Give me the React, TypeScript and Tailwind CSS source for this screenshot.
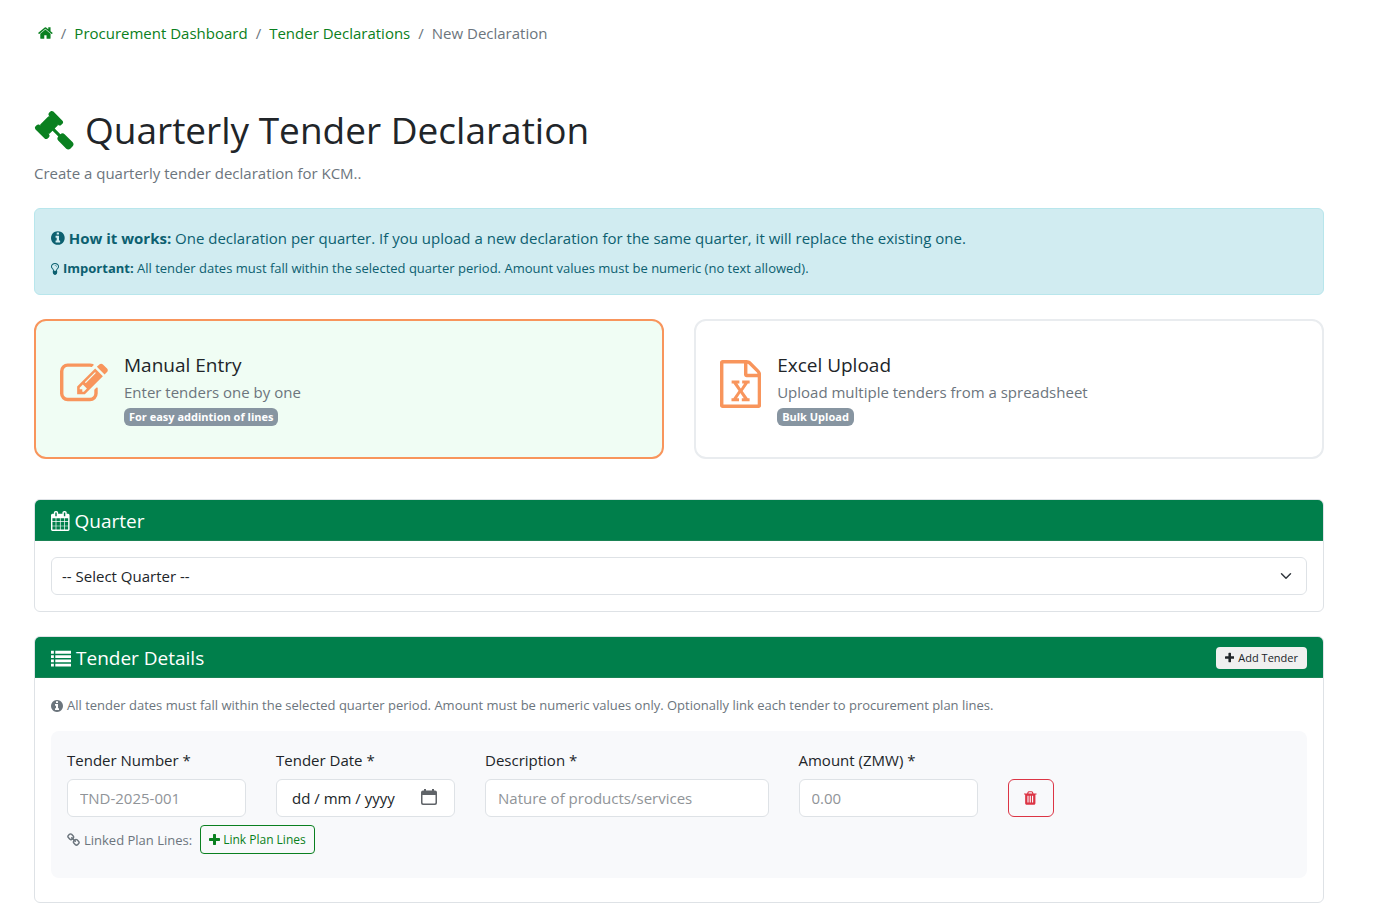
import { ReactNode } from "react";

const icons = {
    home: {
        x: 64, w: 1664,
        d: "M1472 992v480q0 26-19 45t-45 19h-384v-384h-256v384h-384q-26 0-45-19t-19-45v-480q0-1 .5-3t.5-3l575-474 575 474q1 2 1 6zm223-69l-62 74q-8 9-21 11h-3q-13 0-21-7l-692-577-692 577q-12 8-24 7-13-2-21-11l-62-74q-8-10-7-23.5t11-21.5l719-599q32-26 76-26t76 26l244 204v-195q0-14 9-23t23-9h192q14 0 23 9t9 23v408l219 182q10 8 11 21.5t-7 23.5z"
    },
    gavel: {
        x: 0, w: 1792,
        d: "M1771 1536q0 53-37 90l-107 108q-39 37-91 37-53 0-90-37l-363-364q-38-36-38-90 0-53 43-96l-256-256-126 126q-14 14-34 14t-34-14q2 2 12.5 12t12.5 13 10 11.5 10 13.5 6 13.5 5.5 16.5 1.5 18q0 38-28 68-3 3-16.5 18t-19 20.5-18.5 16.5-22 15.5-22 9-26 4.5q-40 0-68-28l-408-408q-28-28-28-68 0-13 4.5-26t9-22 15.5-22 16.5-18.5 20.5-19 18-16.5q30-28 68-28 10 0 18 1.5t16.5 5.5 13.5 6 13.5 10 11.5 10 13 12.5 12 12.5q-14-14-14-34t14-34l348-348q14-14 34-14t34 14q-2-2-12.5-12t-12.5-13-10-11.5-10-13.5-6-13.5-5.5-16.5-1.5-18q0-38 28-68 3-3 16.5-18t19-20.5 18.5-16.5 22-15.5 22-9 26-4.5q40 0 68 28l408 408q28 28 28 68 0 13-4.5 26t-9 22-15.5 22-16.5 18.5-20.5 19-18 16.5q-30 28-68 28-10 0-18-1.5t-16.5-5.5-13.5-6-13.5-10-11.5-10-13-12.5-12-12.5q14 14 14 34t-14 34l-126 126 256 256q43-43 96-43 52 0 91 37l363 363q37 39 37 91z"
    },
    info: {
        x: 128, w: 1536,
        d: "M1152 1376v-160q0-14-9-23t-23-9h-96v-512q0-14-9-23t-23-9h-320q-14 0-23 9t-9 23v160q0 14 9 23t23 9h96v320h-96q-14 0-23 9t-9 23v160q0 14 9 23t23 9h448q14 0 23-9t9-23zm-128-896v-160q0-14-9-23t-23-9h-192q-14 0-23 9t-9 23v160q0 14 9 23t23 9h192q14 0 23-9t9-23zm640 416q0 209-103 385.5t-279.5 279.5-385.5 103-385.5-103-279.5-279.5-103-385.5 103-385.5 279.5-279.5 385.5-103 385.5 103 279.5 279.5 103 385.5z"
    },
    bulb: {
        x: 384, w: 1024,
        d: "M1120 576q0 13-9.5 22.5t-22.5 9.5-22.5-9.5-9.5-22.5q0-46-54-71t-106-25q-13 0-22.5-9.5t-9.5-22.5 9.5-22.5 22.5-9.5q50 0 99.5 16t87 54 37.5 90zm160 0q0-72-34.5-134t-90-101.5-123-62-136.5-22.5-136.5 22.5-123 62-90 101.5-34.5 134q0 101 68 180 10 11 30.5 33t30.5 33q128 153 141 298h228q13-145 141-298 10-11 30.5-33t30.5-33q68-79 68-180zm128 0q0 155-103 268-45 49-74.5 87t-59.5 95.5-34 107.5q47 28 47 82 0 37-25 64 25 27 25 64 0 52-45 81 13 23 13 47 0 46-31.5 71t-77.5 25q-20 44-60 70t-87 26-87-26-60-70q-46 0-77.5-25t-31.5-71q0-24 13-47-45-29-45-81 0-37 25-64-25-27-25-64 0-54 47-82-4-50-34-107.5t-59.5-95.5-74.5-87q-103-113-103-268 0-99 44.5-184.5t117-142 164-89 186.5-32.5 186.5 32.5 164 89 117 142 44.5 184.5z"
    },
    edit: {
        x: 0, w: 1792,
        d: "M888 1184l116-116-152-152-116 116v56h96v96h56zm440-720q-16-16-33 1l-350 350q-17 17-1 33t33-1l350-350q17-17 1-33zm80 594v190q0 119-84.5 203.5t-203.5 84.5h-832q-119 0-203.5-84.5t-84.5-203.5v-832q0-119 84.5-203.5t203.5-84.5h832q63 0 117 25 15 7 18 23 3 17-9 29l-49 49q-14 14-32 8-23-6-45-6h-832q-66 0-113 47t-47 113v832q0 66 47 113t113 47h832q66 0 113-47t47-113v-126q0-13 9-22l64-64q15-15 35-7t20 29zm-96-738l288 288-672 672h-288v-288zm444 132l-92 92-288-288 92-92q28-28 68-28t68 28l152 152q28 28 28 68t-28 68z"
    },
    excel: {
        x: 128, w: 1536,
        d: "M1596 380q28 28 48 76t20 88v1152q0 40-28 68t-68 28h-1344q-40 0-68-28t-28-68v-1600q0-40 28-68t68-28h896q40 0 88 20t76 48zm-444-244v376h376q-10-29-22-41l-313-313q-12-12-41-22zm384 1528v-1024h-416q-40 0-68-28t-28-68v-416h-768v1536h1280zm-979-234v106h281v-106h-75l103-161q5-7 10-16.5t7.5-13.5 3.5-4h2q1 4 5 10 2 4 4.5 7.5t6 8 6.5 8.5l107 161h-76v106h291v-106h-68l-192-273 195-282h67v-107h-279v107h74l-103 159q-4 7-10 16.5t-9 13.5l-2 3h-2q-1-4-5-10-6-11-17-23l-106-159h76v-107h-290v107h68l189 272-194 283h-68z"
    },
    calendar: {
        x: 64, w: 1664,
        d: "M192 1664h288v-288h-288v288zm352 0h320v-288h-320v288zm-352-352h288v-320h-288v320zm352 0h320v-320h-320v320zm-352-384h288v-288h-288v288zm736 736h320v-288h-320v288zm-384-736h320v-288h-320v288zm768 736h288v-288h-288v288zm-384-352h320v-320h-320v320zm-352-864v-288q0-13-9.5-22.5t-22.5-9.5h-64q-13 0-22.5 9.5t-9.5 22.5v288q0 13 9.5 22.5t22.5 9.5h64q13 0 22.5-9.5t9.5-22.5zm736 864h288v-320h-288v320zm-384-384h320v-288h-320v288zm384 0h288v-288h-288v288zm32-480v-288q0-13-9.5-22.5t-22.5-9.5h-64q-13 0-22.5 9.5t-9.5 22.5v288q0 13 9.5 22.5t22.5 9.5h64q13 0 22.5-9.5t9.5-22.5zm384-64v1280q0 52-38 90t-90 38h-1408q-52 0-90-38t-38-90v-1280q0-52 38-90t90-38h128v-96q0-66 47-113t113-47h64q66 0 113 47t47 113v96h384v-96q0-66 47-113t113-47h64q66 0 113 47t47 113v96h128q52 0 90 38t38 90z"
    },
    list: {
        x: 0, w: 1792,
        d: "M0 256h256v256H0zM384 256h1408v256H384zM0 640h256v256H0zM384 640h1408v256H384zM0 1024h256v256H0zM384 1024h1408v256H384zM0 1408h256v256H0zM384 1408h1408v256H384z"
    },
    plus: {
        x: 192, w: 1408,
        d: "M1600 736v192q0 40-28 68t-68 28h-416v416q0 40-28 68t-68 28h-192q-40 0-68-28t-28-68v-416h-416q-40 0-68-28t-28-68v-192q0-40 28-68t68-28h416v-416q0-40 28-68t68-28h192q40 0 68 28t28 68v416h416q40 0 68 28t28 68z"
    },
    trash: {
        x: 192, w: 1408,
        d: "M704 1376v-704q0-14-9-23t-23-9h-64q-14 0-23 9t-9 23v704q0 14 9 23t23 9h64q14 0 23-9t9-23zm256 0v-704q0-14-9-23t-23-9h-64q-14 0-23 9t-9 23v704q0 14 9 23t23 9h64q14 0 23-9t9-23zm256 0v-704q0-14-9-23t-23-9h-64q-14 0-23 9t-9 23v704q0 14 9 23t23 9h64q14 0 23-9t9-23zm-544-992h448l-48-117q-7-9-17-11h-317q-10 2-17 11zm928 32v64q0 14-9 23t-23 9h-96v948q0 83-47 143.5t-113 60.5h-832q-66 0-113-58.5t-47-141.5v-952h-96q-14 0-23-9t-9-23v-64q0-14 9-23t23-9h309l70-167q15-37 54-63t79-26h320q40 0 79 26t54 63l70 167h309q14 0 23 9t9 23z"
    },
    link: {
        x: 64, w: 1664,
        d: "M1520 1216q0-40-28-68l-208-208q-28-28-68-28-42 0-72 32 3 3 19 18.5t21.5 21.5 15 19 13 25.5 3.5 27.5q0 40-28 68t-68 28q-15 0-27.5-3.5t-25.5-13-19-15-21.5-21.5-18.5-19q-33 31-33 73 0 40 28 68l206 207q27 27 68 27 40 0 68-26l147-146q28-28 28-67zm-703-705q0-40-28-68l-206-207q-28-28-68-28-39 0-68 27l-147 146q-28 28-28 67 0 40 28 68l208 208q27 27 68 27 42 0 72-31-3-3-19-18.5t-21.5-21.5-15-19-13-25.5-3.5-27.5q0-40 28-68t68-28q15 0 27.5 3.5t25.5 13 19 15 21.5 21.5 18.5 19q33-31 33-73zm895 705q0 120-85 203l-147 146q-83 83-203 83-121 0-204-85l-206-207q-83-83-83-203 0-123 88-209l-88-88q-86 88-208 88-120 0-204-84l-208-208q-84-84-84-204t85-203l147-146q83-83 203-83 121 0 204 85l206 207q83 83 83 203 0 123-88 209l88 88q86-88 208-88 120 0 204 84l208 208q84 84 84 204z"
    }
};

interface IconProps {
    name: keyof typeof icons;
    className: string;
}

function Icon({ name, className }: IconProps) {
    const icon = icons[name];
    return (
        <svg className={"w-auto shrink-0 " + className} viewBox={`${icon.x} 0 ${icon.w} 1792`} fill="currentColor" aria-hidden="true">
            <path d={icon.d} />
        </svg>
    )
}

const control = "w-full h-[38px] rounded-md border border-[#dee2e6] bg-white text-[15px] text-[#212529]";
const textBox = control + " px-3 placeholder:text-[#909498]";

interface FieldProps {
    id: string;
    label: string;
    className: string;
    children: ReactNode;
}

function Field({ id, label, className, children }: FieldProps) {
    return (
        <div className={className}>
            <label htmlFor={id} className="block mb-[7px] whitespace-nowrap">{label}</label>
            {children}
        </div>
    )
}

interface MethodCardProps {
    icon: keyof typeof icons;
    title: string;
    text: string;
    badge: string;
    selected?: boolean;
}

function MethodCard(props: MethodCardProps) {
    const { icon, title, text, badge, selected } = props;

    return (
        <button
            type="button"
            aria-pressed={!!selected}
            className={"flex items-start gap-4 px-6 pt-8 pb-7 text-left rounded-xl border-2 "
                + (selected ? "border-[#f8955c] bg-[#f0fdf4]" : "border-[#e9ecef] bg-white")}
        >
            <Icon name={icon} className="h-12 mt-[7px] text-[#f8955c]" />
            <span className="flex flex-col items-start">
                <span className="mb-[3px] text-[19px] leading-6">{title}</span>
                <span className="text-[#6c757d]">{text}</span>
                <span className="mt-1 mb-[3px] px-[5px] rounded-md bg-[#8795a1] text-white text-[11px] leading-[18px] font-bold">{badge}</span>
            </span>
        </button>
    )
}

interface PanelProps {
    icon: keyof typeof icons;
    title: string;
    action?: ReactNode;
    children: ReactNode;
}

function Panel({ icon, title, action, children }: PanelProps) {
    return (
        <section className="rounded-md border border-[#dee2e6] overflow-hidden">
            <header className="flex items-center justify-between px-4 pt-[9px] pb-[7px] bg-[#007f4b] text-white border-b border-[#1a8355]">
                <h5 className="flex items-center gap-[5px] text-[19px] leading-6">
                    <Icon name={icon} className="h-5" />
                    {title}
                </h5>
                {action}
            </header>
            {children}
        </section>
    )
}

export default function App() {
    return (
        <div className="min-h-screen bg-white pt-[21px] pb-4 pl-[34px] pr-[62px] font-['Open_Sans',sans-serif] text-[15px] leading-6 text-[#212529]">
            <nav aria-label="breadcrumb" className="px-1">
                <ol className="flex items-center gap-2 text-[#6c757d]">
                    <li><a href="#" aria-label="Home" className="text-[#0a8020]"><Icon name="home" className="h-4" /></a></li>
                    <li>/</li>
                    <li><a href="#" className="text-[#0a8020]">Procurement Dashboard</a></li>
                    <li>/</li>
                    <li><a href="#" className="text-[#0a8020]">Tender Declarations</a></li>
                    <li>/</li>
                    <li>New Declaration</li>
                </ol>
            </nav>

            <h1 className="flex items-center gap-[11px] mt-[59px] text-[37px] leading-[52px]">
                <Icon name="gavel" className="h-10 text-[#0a8020]" />
                Quarterly Tender Declaration
            </h1>
            <p className="mt-[5px] text-[#6c757d]">Create a quarterly tender declaration for KCM..</p>

            <div role="alert" className="mt-[23px] px-4 pt-[17px] pb-[15px] rounded-md border border-[#b8e6ec] bg-[#d1ecf1] text-[#0c6070]">
                <p className="flex items-center gap-1 mb-2">
                    <Icon name="info" className="h-4" />
                    <span><strong>How it works:</strong> One declaration per quarter. If you upload a new declaration for the same quarter, it will replace the existing one.</span>
                </p>
                <p className="flex items-center gap-1 text-[13px] leading-[21px]">
                    <Icon name="bulb" className="h-[14px]" />
                    <span><strong>Important:</strong> All tender dates must fall within the selected quarter period. Amount values must be numeric (no text allowed).</span>
                </p>
            </div>

            <div className="grid grid-cols-2 gap-[30px] mt-6 mb-10">
                <MethodCard icon="edit" title="Manual Entry" text="Enter tenders one by one" badge="For easy addintion of lines" selected />
                <MethodCard icon="excel" title="Excel Upload" text="Upload multiple tenders from a spreadsheet" badge="Bulk Upload" />
            </div>

            <form className="flex flex-col gap-6">
                <Panel icon="calendar" title="Quarter">
                    <div className="relative p-4">
                        <select aria-label="Quarter" className={control + " block appearance-none px-[10px]"}>
                            <option>-- Select Quarter --</option>
                        </select>
                        <svg className="absolute right-[31px] top-[29px] size-3 pointer-events-none" viewBox="0 0 16 16" fill="none" stroke="#343a40" strokeWidth="2" strokeLinecap="round" strokeLinejoin="round">
                            <path d="m2 5 6 6 6-6" />
                        </svg>
                    </div>
                </Panel>

                <Panel
                    icon="list"
                    title="Tender Details"
                    action={
                        <button type="button" className="flex items-center gap-1 h-[22px] px-[9px] rounded bg-[#f0f0f0] text-[#212529] text-[11px]">
                            <Icon name="plus" className="h-3" />
                            Add Tender
                        </button>
                    }
                >
                    <div className="px-4 pt-[17px] pb-6">
                        <p className="flex items-center gap-1 mb-[15px] text-[13px] leading-[21px] text-[#6c757d]">
                            <Icon name="info" className="h-[14px]" />
                            All tender dates must fall within the selected quarter period. Amount must be numeric values only. Optionally link each tender to procurement plan lines.
                        </p>
                        <div className="px-4 pt-[17px] pb-6 rounded-lg bg-[#f8f9fb]">
                            <div className="grid grid-cols-12 gap-x-[30px] items-end">
                                <Field id="number" label="Tender Number *" className="col-span-2">
                                    <input id="number" type="text" placeholder="TND-2025-001" className={textBox} />
                                </Field>
                                <Field id="date" label="Tender Date *" className="col-span-2">
                                    <div className="relative">
                                        <input id="date" type="text" placeholder="dd / mm / yyyy" className={control + " pl-[15px] pr-10 placeholder:text-[#212529]"} />
                                        <svg className="absolute right-[18px] top-[10px] size-4 pointer-events-none" viewBox="0 0 16 16" fill="#5f6368">
                                            <path d="M3 0h2v1.5h6V0h2v1.5h1a2 2 0 0 1 2 2V14a2 2 0 0 1-2 2H2a2 2 0 0 1-2-2V3.5a2 2 0 0 1 2-2h1zM1.5 6v7.5a1 1 0 0 0 1 1h11a1 1 0 0 0 1-1V6z" fillRule="evenodd" />
                                        </svg>
                                    </div>
                                </Field>
                                <Field id="description" label="Description *" className="col-span-3">
                                    <input id="description" type="text" placeholder="Nature of products/services" className={textBox} />
                                </Field>
                                <Field id="amount" label="Amount (ZMW) *" className="col-span-2">
                                    <input id="amount" type="text" placeholder="0.00" className={textBox} />
                                </Field>
                                <button type="button" aria-label="Remove tender" className="flex items-center justify-center w-[46px] h-[38px] rounded-md border border-[#dc3545] text-[#dc3545]">
                                    <Icon name="trash" className="h-4" />
                                </button>
                            </div>
                            <div className="flex items-center gap-2 mt-2 text-[13px] text-[#6c757d]">
                                <span className="flex items-center gap-1">
                                    <Icon name="link" className="h-[14px]" />
                                    Linked Plan Lines:
                                </span>
                                <button type="button" className="flex items-center gap-[3px] h-[29px] px-2 rounded border border-[#0a8020] text-[#0a8020] text-[12px]">
                                    <Icon name="plus" className="h-[14px]" />
                                    Link Plan Lines
                                </button>
                            </div>
                        </div>
                    </div>
                </Panel>
            </form>
        </div>
    )
}
